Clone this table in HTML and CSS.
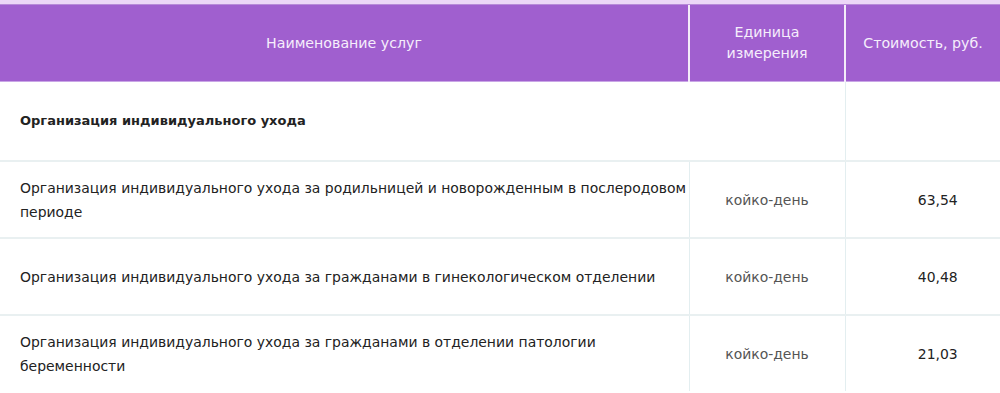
FILE: index.html
```html
<!DOCTYPE html>
<html lang="ru">
<head>
<meta charset="utf-8">
<title>Стоимость услуг</title>
<link rel="stylesheet" href="styles.css">
</head>
<body>
<div class="topbar"></div>
<table class="prices">
  <colgroup>
    <col class="c-name">
    <col class="c-unit">
    <col class="c-cost">
  </colgroup>
  <thead>
    <tr>
      <th>Наименование услуг</th>
      <th>Единица<br>измерения</th>
      <th>Стоимость, руб.</th>
    </tr>
  </thead>
  <tbody>
    <tr class="section">
      <td colspan="2" class="sec-title">Организация индивидуального ухода</td>
      <td></td>
    </tr>
    <tr>
      <td class="name">Организация индивидуального ухода за родильницей и новорожденным в послеродовом периоде</td>
      <td class="unit">койко-день</td>
      <td class="cost">63,54</td>
    </tr>
    <tr>
      <td class="name">Организация индивидуального ухода за гражданами в гинекологическом отделении</td>
      <td class="unit">койко-день</td>
      <td class="cost">40,48</td>
    </tr>
    <tr>
      <td class="name">Организация индивидуального ухода за гражданами в отделении патологии беременности</td>
      <td class="unit">койко-день</td>
      <td class="cost">21,03</td>
    </tr>
  </tbody>
</table>
</body>
</html>
```
FILE: styles.css
```css
html, body {
  margin: 0;
  padding: 0;
  background: #ffffff;
}
body {
  font-family: "DejaVu Sans", "Noto Sans", sans-serif;
  font-size: 13.95px;
  color: #222222;
  overflow: hidden;
}
.topbar {
  height: 4px;
  background: #ecd6f7;
  border-bottom: 1px solid #b88ad9;
}
.prices {
  width: 1000px;
  border-collapse: collapse;
  table-layout: fixed;
}
.c-name { width: 689px; }
.c-unit { width: 156px; }
.c-cost { width: 155px; }
.prices th {
  background: #a05fcf;
  color: #f6eefc;
  font-weight: normal;
  font-size: 14.2px;
  height: 76px;
  padding: 0 10px;
  line-height: 21px;
  text-align: center;
  vertical-align: middle;
  border-left: 2px solid #f4ecf9;
  border-bottom: 1px solid #c9a6e6;
}
.prices th:first-child { border-left: none; }
.prices td {
  height: 75px;
  padding: 0 10px 0 20px;
  line-height: 24px;
  vertical-align: middle;
  border-top: 2px solid #e9f0f1;
  border-left: 1px solid #e3eef0;
}
.prices td:first-child { border-left: none; }
.prices tbody tr.section td {
  border-top: none;
  height: 78px;
}
.sec-title {
  font-weight: bold;
  font-size: 13px;
}
.prices td.unit {
  text-align: center;
  color: #555555;
  padding: 0;
}
.prices td.cost {
  text-align: center;
  padding: 0 0 0 30px;
}
.prices td.name { padding-right: 0; }
```
